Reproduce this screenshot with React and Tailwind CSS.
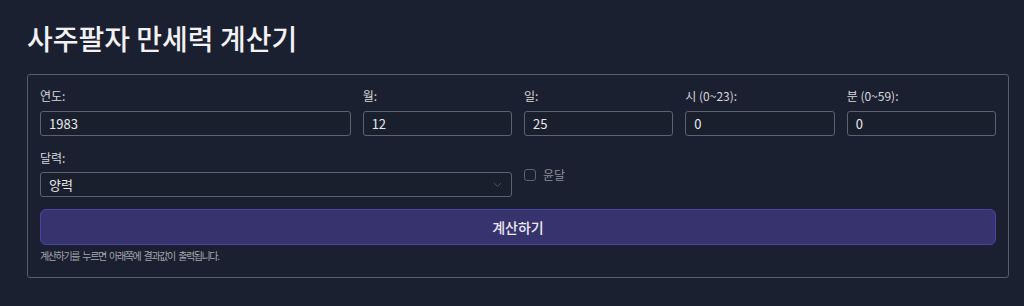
import React from "react";

const font = { fontFamily: '"Noto Sans CJK KR", "Noto Sans", sans-serif' };

function Field({ label, value, span }) {
  return (
    <div className={span}>
      <div className="text-[12px] leading-[16px] text-[#d6d7dc]">{label}</div>
      <div className="mt-[7px] h-[25px] rounded-[3px] border border-[#5d6270] bg-[#1a1f2d] px-[8px] flex items-center text-[13px] text-[#e8e8ea]">
        {value}
      </div>
    </div>
  );
}

export default function App() {
  return (
    <div style={font} className="w-[1024px] h-[306px] bg-[#1b2030] pl-[27px] pr-[15px] pt-[18px] overflow-hidden">
      <h1 className="text-[28px] leading-[40px] font-medium text-[#f2f2f4]">사주팔자 만세력 계산기</h1>
      <div className="mt-[16px] border border-[#585d6b] rounded-[3px] px-[12px] pt-[13px] pb-[14px]">
        <div className="grid grid-cols-6 gap-x-[12px]">
          <Field label="연도:" value="1983" span="col-span-2" />
          <Field label="월:" value="12" span="col-span-1" />
          <Field label="일:" value="25" span="col-span-1" />
          <Field label="시 (0~23):" value="0" span="col-span-1" />
          <Field label="분 (0~59):" value="0" span="col-span-1" />
        </div>
        <div className="grid grid-cols-6 gap-x-[12px] mt-[14px]">
          <div className="col-span-3">
            <div className="text-[12px] leading-[16px] text-[#d6d7dc]">달력:</div>
            <div className="mt-[6px] h-[25px] rounded-[3px] border border-[#5d6270] bg-[#1a1f2d] pl-[8px] pr-[8px] flex items-center justify-between text-[13px] text-[#e8e8ea]">
              <span>양력</span>
              <svg width="9" height="6" viewBox="0 0 9 6" fill="none" className="mr-[1px]">
                <path d="M1 1L4.5 4.5L8 1" stroke="#4d5260" strokeWidth="1" />
              </svg>
            </div>
          </div>
          <div className="col-span-3 flex items-start pt-[17px]">
            <div className="flex items-center gap-[7px]">
              <div className="w-[12px] h-[12px] rounded-[3px] border border-[#5d6270]" />
              <span className="text-[12px] leading-[16px] text-[#8c8f98]">윤달</span>
            </div>
          </div>
        </div>
        <button className="mt-[12px] w-full h-[36px] rounded-[6px] border border-[#4b44a6] bg-[#37336f] text-[14px] text-[#ececf2] font-medium flex items-center justify-center">
          계산하기
        </button>
        <div className="mt-[4px] text-[10px] leading-[14px] text-[#a3a6ae] tracking-[-1.4px] [word-spacing:2.5px]">
          계산하기를 누르면 아래쪽에 결과값이 출력됩니다.
        </div>
      </div>
    </div>
  );
}
